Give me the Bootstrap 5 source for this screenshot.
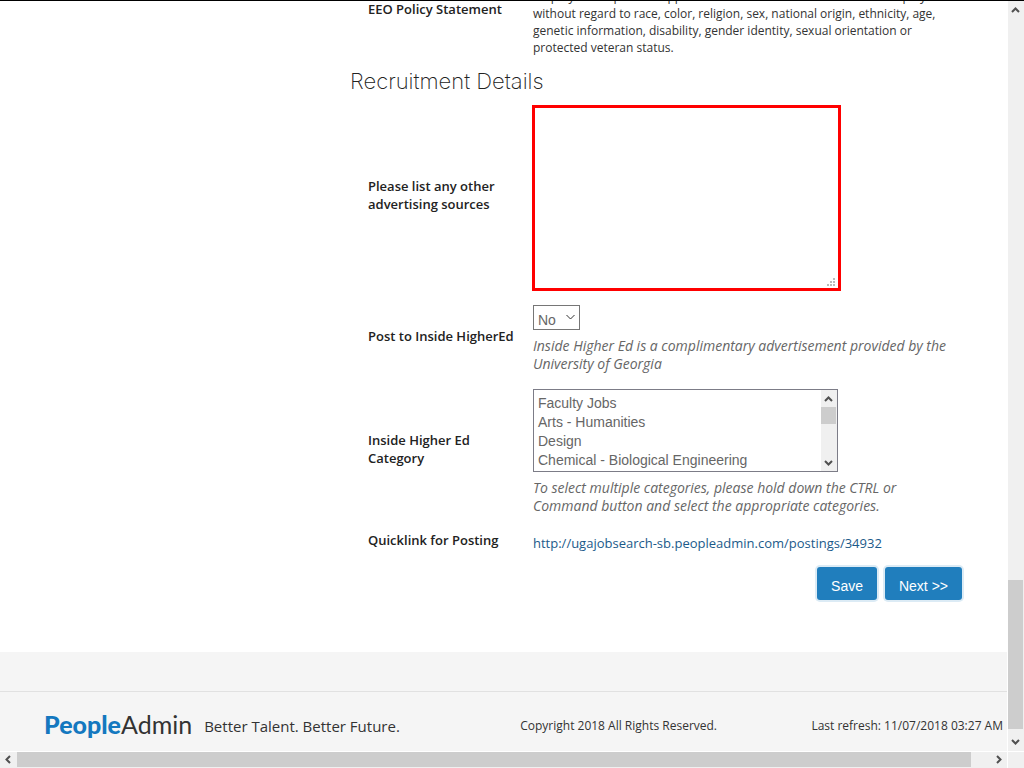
<!DOCTYPE html>
<html lang="en">
<head>
<meta charset="utf-8">
<meta name="viewport" content="width=device-width, initial-scale=1">
<title>Recruitment Details</title>
<link href="https://cdn.jsdelivr.net/npm/bootstrap@5.3.0/dist/css/bootstrap.min.css" rel="stylesheet">
<style>
body{font-family:"Open Sans",sans-serif;font-size:13px;line-height:18px;color:#333;background:#fff}
.window{display:grid;grid-template-columns:minmax(0,1fr) 16px;grid-template-rows:minmax(0,1fr) 16px;column-gap:1px;row-gap:1px;border-top:1px solid #000}
.posting{padding-left:350px;padding-right:45px;margin-top:-13px}
.field-row{display:grid;grid-template-columns:147px minmax(0,428px);column-gap:18px;padding-left:18px;align-items:center}
.field-row + .field-row{margin-top:16px}
.field-row + .field-row.after-box{margin-top:14px}
.field-name{font-weight:600;color:#222;padding-bottom:6px;margin:0}
.policy{font-size:12px;line-height:17px}
.policy-name{padding-bottom:26px}
.section-title{font-family:Inter,sans-serif;font-weight:200;font-size:22px;line-height:30px;margin:10px 0 9px;color:#222}
.sources-box{width:fit-content;margin-left:-1px}
.sources{width:309px;height:186px;border:3px solid #f00;border-radius:0;resize:none;padding:4px;display:block}
.grip{right:5px;bottom:4px}
.choice{width:47px;height:25px;border:1px solid #767676;border-radius:0;background:#fff;color:#666;font:14px/18px "Liberation Sans",sans-serif;padding:4px 4px 0;appearance:none}
.choice-arrow{right:5px;top:9px;pointer-events:none}
.control{margin-bottom:7px}
.hint{font-size:14px;font-style:italic;color:#666;line-height:18px;margin:0}
.listbox{width:305px;height:83px;border:1px solid #7c7c87}
.listbox select{border:0;outline:0;background:#fff;color:#666;font:14px/19px "Liberation Sans",sans-serif;padding:5px 0 0 4px;scrollbar-width:none;overflow:hidden;border-radius:0;appearance:none}
.listbox select::-webkit-scrollbar{display:none}
.listbox option{padding:0;line-height:19px;min-height:19px}
.vbar,.hbar{background:#f0f0f0}
.vbar{width:16px}
.thumb{background:#cdcdcd}
.vbar .thumb{width:15px}
.hbar .thumb{height:15px}
.quicklink{color:#1b5a8a;text-decoration:none}
.actions{margin-top:12px}
.action{background:#207ebd;color:#fff;font:14px/18px "Liberation Sans",sans-serif;border:0;border-radius:3px;padding:10px 14px 5px;box-shadow:0 0 0 2px #dcebf5}
.action:hover{background:#1b6ca3;color:#fff}
.foot{background:#f5f5f5}
.foot-band{height:40px;border-bottom:1px solid #e1e1e1}
.foot-main{height:59px;padding:8px 4px 0 44px;font-size:12px;display:grid;grid-template-columns:auto 1fr auto;align-items:center}
.brand{column-gap:12px}
.logo{font-family:Lato,sans-serif;font-size:25px;line-height:30px;color:#333;text-decoration:none;padding-bottom:4px}
.logo b{font-weight:900;color:#1478bf}
.tagline{font-size:15px;line-height:20px}
.copyright{padding-left:26px}
</style>
</head>
<body>
<div class="window vh-100 overflow-hidden">
  <div class="d-flex flex-column overflow-hidden">
    <main class="flex-grow-1">
      <form class="posting">
        <div class="field-row">
          <div class="field-name policy-name">EEO Policy Statement</div>
          <div class="policy">employer. All qualified applicants will receive consideration for employment without regard to race, color, religion, sex, national origin, ethnicity, age, genetic information, disability, gender identity, sexual orientation or protected veteran status.</div>
        </div>
        <h2 class="section-title">Recruitment Details</h2>
        <div class="field-row">
          <label class="field-name" for="sources">Please list any other advertising sources</label>
          <div class="position-relative sources-box">
            <textarea class="sources" id="sources"></textarea>
            <svg class="grip position-absolute" width="9" height="9" fill="#bbb"><path d="M6 0h2v2H6zM3 3h2v2H3zM6 3h2v2H6zM0 6h2v2H0zM3 6h2v2H3zM6 6h2v2H6z"/></svg>
          </div>
        </div>
        <div class="field-row after-box">
          <label class="field-name" for="post">Post to Inside HigherEd</label>
          <div>
            <div class="position-relative d-table control">
              <select class="choice d-block" id="post"><option>No</option><option>Yes</option></select>
              <svg class="choice-arrow position-absolute" width="9" height="7" fill="none" stroke="#333"><path d="M.5 1l4 4 4-4"/></svg>
            </div>
            <p class="hint">Inside Higher Ed is a complimentary advertisement provided by the University of Georgia</p>
          </div>
        </div>
        <div class="field-row">
          <label class="field-name" for="category">Inside Higher Ed Category</label>
          <div>
            <div class="listbox d-flex control">
              <select class="flex-grow-1" id="category" multiple size="4"><option>Faculty Jobs</option><option>Arts - Humanities</option><option>Design</option><option>Chemical - Biological Engineering</option></select>
              <div class="vbar d-flex flex-column">
                <svg width="16" height="17" fill="none" stroke="#505050" stroke-width="2"><path d="M4 11l3.500-3.500L11 11"/></svg>
                <div class="thumb" style="height:17px"></div>
                <svg class="mt-auto" width="16" height="17" fill="none" stroke="#505050" stroke-width="2"><path d="M4 7l3.500 3.500L11 7"/></svg>
              </div>
            </div>
            <p class="hint">To select multiple categories, please hold down the CTRL or Command button and select the appropriate categories.</p>
          </div>
        </div>
        <div class="field-row">
          <div class="field-name">Quicklink for Posting</div>
          <div><a class="quicklink" href="#">http://ugajobsearch-sb.peopleadmin.com/postings/34932</a></div>
        </div>
        <div class="d-flex justify-content-end gap-2 actions">
          <button type="button" class="btn action">Save</button>
          <button type="button" class="btn action">Next &gt;&gt;</button>
        </div>
      </form>
    </main>
    <footer class="foot">
      <div class="foot-band"></div>
      <div class="foot-main">
        <div class="d-flex align-items-center brand"><a class="logo" href="#"><b>People</b>Admin</a><span class="tagline">Better Talent. Better Future.</span></div>
        <div class="text-center copyright">Copyright 2018 All Rights Reserved.</div>
        <div>Last refresh: 11/07/2018 03:27 AM</div>
      </div>
    </footer>
  </div>
  <div class="vbar d-flex flex-column">
    <svg width="16" height="17" fill="none" stroke="#505050" stroke-width="2"><path d="M4 11l3.500-3.500L11 11"/></svg>
    <div class="flex-grow-1 d-flex flex-column"><div class="thumb mt-auto" style="height:21%"></div></div>
    <svg class="mt-1" width="16" height="18" fill="none" stroke="#505050" stroke-width="2"><path d="M4 7l3.500 3.500L11 7"/></svg>
  </div>
  <div class="hbar d-flex justify-content-between">
    <svg width="17" height="16" fill="none" stroke="#505050" stroke-width="2"><path d="M10 4L6.500 7.500 10 11"/></svg>
    <div class="flex-grow-1"><div class="thumb" style="width:98%"></div></div>
    <svg width="17" height="16" fill="none" stroke="#505050" stroke-width="2"><path d="M7 4l3.500 3.500L7 11"/></svg>
  </div>
  <div class="vbar"></div>
</div>
<script src="https://cdn.jsdelivr.net/npm/bootstrap@5.3.0/dist/js/bootstrap.bundle.min.js"></script>
</body>
</html>
